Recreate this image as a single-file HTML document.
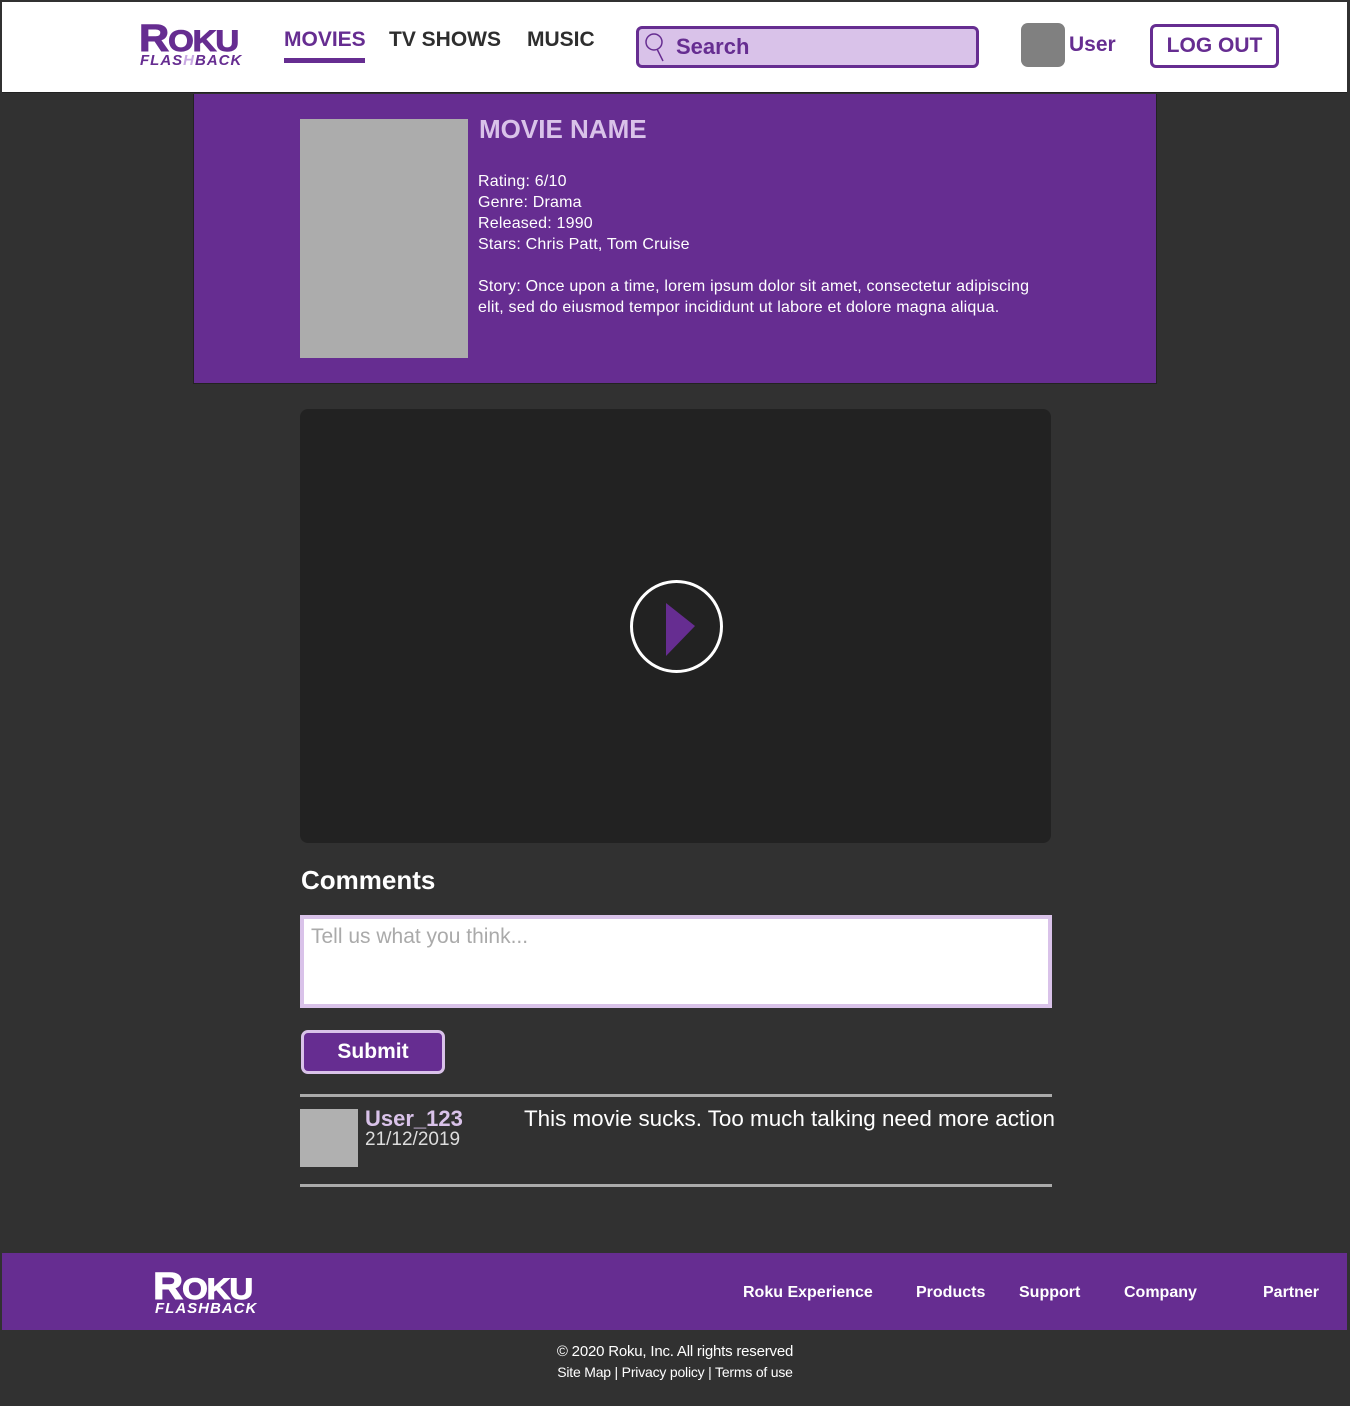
<!DOCTYPE html>
<html><head><meta charset="utf-8">
<style>
*{box-sizing:border-box;margin:0;padding:0}
body{width:1350px;height:1406px;background:#313131;font-family:"Liberation Sans",sans-serif;position:relative;overflow:hidden}
.abs{position:absolute}
.hdr{left:2px;top:2px;width:1345px;height:91px;background:#fff;border-bottom:1px solid #222}
.logo1{font-weight:900;font-size:38px;letter-spacing:-1px;line-height:1;transform:scaleX(1.1);transform-origin:left top;-webkit-text-stroke:1px currentColor}
.logo1 .s{font-size:30px}
.logo2{font-weight:bold;font-style:italic;font-size:15px;letter-spacing:1px;line-height:1}
.nav{font-weight:bold;font-size:21px;color:#2e2e2e}
</style></head><body>
<div class="abs hdr"></div>
<div class="abs logo1" style="left:139px;top:20px;color:#662d91">R<span class="s">OKU</span></div>
<div class="abs logo2" style="left:140px;top:53px;color:#662d91">FLAS<span style="color:#c9a9e3">H</span>BACK</div>
<div class="abs nav" style="left:284px;top:28px;color:#662d91">MOVIES</div>
<div class="abs" style="left:284px;top:58px;width:81px;height:5px;background:#662d91"></div>
<div class="abs nav" style="left:389px;top:28px">TV SHOWS</div>
<div class="abs nav" style="left:527px;top:28px">MUSIC</div>
<div class="abs" style="left:636px;top:26px;width:343px;height:42px;background:#d9c2e9;border:3px solid #662d91;border-radius:6px"></div>
<svg class="abs" style="left:644px;top:31px" width="24" height="32"><circle cx="10" cy="11" r="8" fill="none" stroke="#662d91" stroke-width="1.5"/><line x1="13" y1="18" x2="19" y2="30" stroke="#662d91" stroke-width="1.5"/></svg>
<div class="abs" style="left:676px;top:34px;font-weight:bold;font-size:22px;color:#662d91">Search</div>
<div class="abs" style="left:1021px;top:23px;width:44px;height:44px;background:#808080;border-radius:7px"></div>
<div class="abs" style="left:1069px;top:33px;font-weight:bold;font-size:21px;color:#662d91">User</div>
<div class="abs" style="left:1150px;top:24px;width:129px;height:44px;border:3px solid #662d91;border-radius:6px;font-weight:bold;font-size:21px;color:#662d91;text-align:center;line-height:38px">LOG OUT</div>

<div class="abs" style="left:193px;top:94px;width:964px;height:290px;background:#662d91;border:1px solid #222;border-top:none"></div>
<div class="abs" style="left:300px;top:119px;width:168px;height:239px;background:#acacac"></div>
<div class="abs" style="left:479px;top:114px;font-weight:bold;font-size:26px;color:#d9c2e9">MOVIE NAME</div>
<div class="abs" style="left:478px;top:171px;font-size:16px;line-height:21px;color:#fff;letter-spacing:0.2px">Rating: 6/10<br>Genre: Drama<br>Released: 1990<br>Stars: Chris Patt, Tom Cruise<br><br>Story: Once upon a time, lorem ipsum dolor sit amet, consectetur adipiscing<br>elit, sed do eiusmod tempor incididunt ut labore et dolore magna aliqua.</div>

<div class="abs" style="left:300px;top:409px;width:751px;height:434px;background:#222;border-radius:8px"></div>
<svg class="abs" style="left:628px;top:578px" width="97" height="97"><circle cx="48.5" cy="48.5" r="45" fill="none" stroke="#fff" stroke-width="3"/><polygon points="38,25 38,78 67,48" fill="#662d91"/></svg>

<div class="abs" style="left:301px;top:865px;font-weight:bold;font-size:26px;color:#fff">Comments</div>
<div class="abs" style="left:300px;top:915px;width:752px;height:93px;background:#fff;border:4px solid #d9c2e9"></div>
<div class="abs" style="left:311px;top:925px;font-size:21px;color:#aaa">Tell us what you think...</div>
<div class="abs" style="left:301px;top:1030px;width:144px;height:44px;background:#662d91;border:3px solid #d9c2e9;border-radius:7px;color:#fff;font-weight:bold;font-size:21px;text-align:center;line-height:38px">Submit</div>
<div class="abs" style="left:300px;top:1094px;width:752px;height:3px;background:#aaa"></div>
<div class="abs" style="left:300px;top:1109px;width:58px;height:58px;background:#b0b0b0"></div>
<div class="abs" style="left:365px;top:1106px;font-weight:bold;font-size:22px;color:#d9c2e9">User_123</div>
<div class="abs" style="left:365px;top:1129px;font-size:19px;color:#ddd">21/12/2019</div>
<div class="abs" style="left:524px;top:1106px;font-size:22.4px;color:#fff">This movie sucks. Too much talking need more action</div>
<div class="abs" style="left:300px;top:1184px;width:752px;height:3px;background:#aaa"></div>

<div class="abs" style="left:2px;top:1253px;width:1345px;height:77px;background:#662d91"></div>
<div class="abs logo1" style="left:153px;top:1268px;color:#fff">R<span class="s">OKU</span></div>
<div class="abs logo2" style="left:155px;top:1301px;color:#fff">FLASHBACK</div>
<div class="abs" style="left:743px;top:1284px;font-weight:bold;font-size:16px;color:#fff">Roku Experience</div>
<div class="abs" style="left:916px;top:1284px;font-weight:bold;font-size:16px;color:#fff">Products</div>
<div class="abs" style="left:1019px;top:1284px;font-weight:bold;font-size:16px;color:#fff">Support</div>
<div class="abs" style="left:1124px;top:1284px;font-weight:bold;font-size:16px;color:#fff">Company</div>
<div class="abs" style="left:1263px;top:1284px;font-weight:bold;font-size:16px;color:#fff">Partner</div>
<div class="abs" style="left:0;top:1341px;width:1350px;text-align:center;font-size:15px;color:#fff;line-height:21px;letter-spacing:-0.2px">© 2020 Roku, Inc. All rights reserved<br><span style="font-size:14px">Site Map | Privacy policy | Terms of use</span></div>
</body></html>
